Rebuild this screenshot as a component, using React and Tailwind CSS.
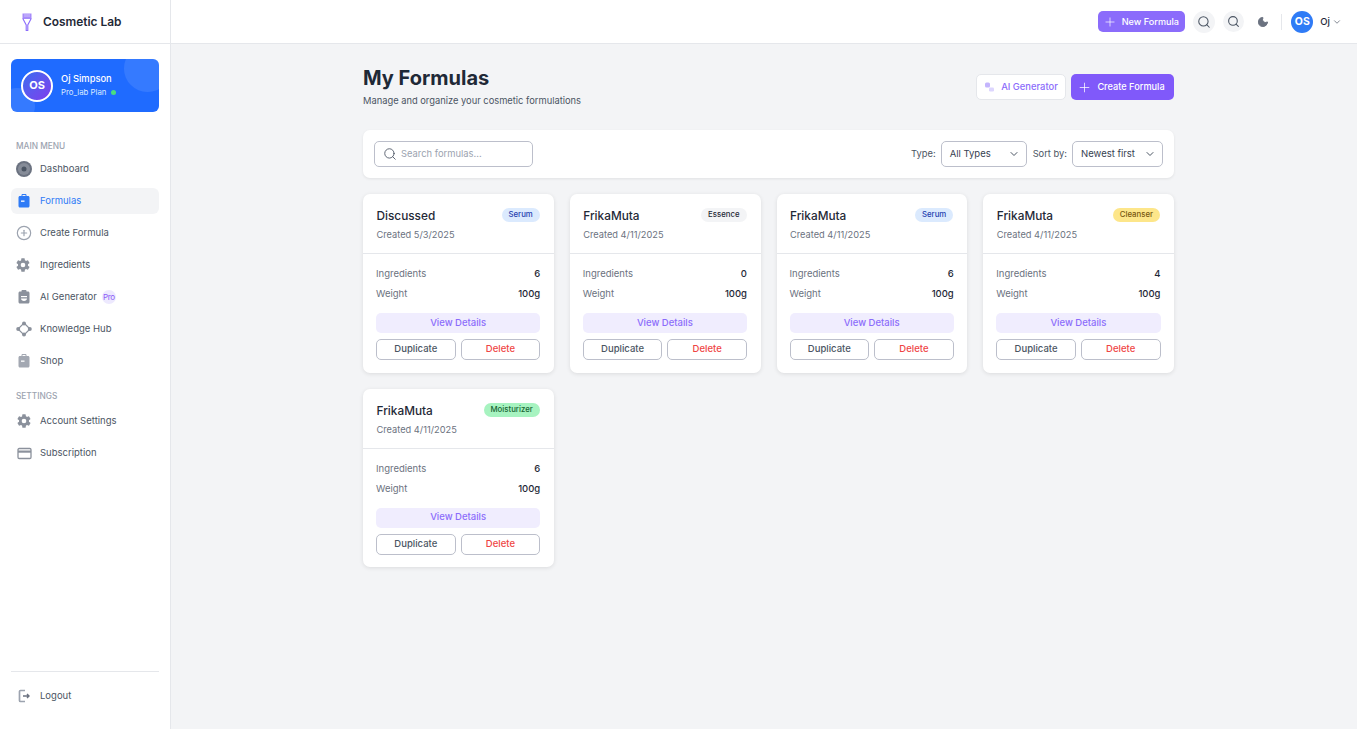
import { Plus, Search, Moon, ChevronDown, CirclePlus } from 'lucide-react';

const cards = [
    { name: 'Discussed', date: '5/3/2025', type: 'Serum', badge: 'bg-[#dbeafe] text-[#1e40af]', count: 6 },
    { name: 'FrikaMuta', date: '4/11/2025', type: 'Essence', badge: 'bg-[#f3f4f6] text-[#1f2937]', count: 0 },
    { name: 'FrikaMuta', date: '4/11/2025', type: 'Serum', badge: 'bg-[#dbeafe] text-[#1e40af]', count: 6 },
    { name: 'FrikaMuta', date: '4/11/2025', type: 'Cleanser', badge: 'bg-[#fde68a] text-[#78570f]', count: 4 },
    { name: 'FrikaMuta', date: '4/11/2025', type: 'Moisturizer', badge: 'bg-[#a7f3c0] text-[#166534]', count: 6 },
];

function DashIcon() {
    return (
        <svg width="16" height="16" viewBox="0 0 16 16">
            <circle cx="8" cy="8" r="8" fill="#6b7280" />
            <circle cx="8" cy="8" r="6" fill="#868c98" />
            <circle cx="8" cy="8" r="2.5" fill="#4b5563" />
        </svg>
    );
}

function BagIcon({ color }) {
    return (
        <svg width="16" height="16" viewBox="0 0 16 16" fill={color}>
            <path d="M5.5 3V2.2C5.5 1.5 6 1 6.7 1h2.6c.7 0 1.2.5 1.2 1.2V3H12c.9 0 1.5.6 1.5 1.5V13c0 .9-.6 1.5-1.5 1.500H4c-.9 0-1.5-.6-1.5-1.500V4.500C2.500 3.600 3.100 3 4 3h1.500zm1 0h3V2h-3v1z" />
            <rect x="5" y="7.500" width="3.500" height="1.300" fill="#fff" />
        </svg>
    );
}

function GearIcon({ className }) {
    return (
        <svg width="16" height="16" viewBox="0 0 24 24" fill="#8b919c" className={className}>
            <path d="M19.400 13c.04-.33.1-.66.1-1s-.06-.67-.1-1l2.100-1.650a.5.5 0 0 0 .12-.64l-2-3.460a.5.5 0 0 0-.61-.22l-2.490 1a7.300 7.300 0 0 0-1.690-.98l-.38-2.650A.49.49 0 0 0 14 2h-4a.49.49 0 0 0-.49.42l-.38 2.650c-.61.25-1.170.59-1.690.98l-2.490-1a.49.49 0 0 0-.61.22l-2 3.460a.49.49 0 0 0 .12.64L4.570 11c-.04.33-.07.66-.07 1s.03.67.07 1l-2.110 1.650a.5.5 0 0 0-.12.64l2 3.460c.12.22.39.3.61.22l2.490-1c.52.4 1.080.73 1.690.98l.38 2.650c.03.24.24.42.49.42h4c.25 0 .46-.18.49-.42l.38-2.650c.61-.25 1.170-.59 1.690-.98l2.490 1c.22.08.49 0 .61-.22l2-3.460a.5.5 0 0 0-.12-.64L19.400 13zM12 15.500a3.500 3.500 0 1 1 0-7 3.500 3.500 0 0 1 0 7z" />
        </svg>
    );
}

function AiIcon() {
    return (
        <svg width="16" height="16" viewBox="0 0 16 16">
            <path d="M5.500 2.500V2c0-.6.4-1 1-1h3c.6 0 1 .4 1 1v.5H12c.8 0 1.500.7 1.500 1.500v9c0 .8-.7 1.500-1.500 1.500H4c-.8 0-1.500-.7-1.500-1.500V4c0-.8.7-1.500 1.500-1.500h1.500z" fill="#8b919c" />
            <path d="M5 9.500c0 1.500 1.300 2.500 3 2.500s3-1 3-2.500H5z" fill="#fff" />
            <rect x="5" y="7" width="6" height="1.200" fill="#fff" />
        </svg>
    );
}

function HubIcon() {
    return (
        <svg width="16" height="16" viewBox="0 0 16 16" fill="none">
            <path d="M8 2 14 8 8 14 2 8Z" stroke="#8b919c" strokeWidth="1.200" />
            <circle cx="8" cy="2.500" r="2" fill="#8b919c" />
            <circle cx="8" cy="13.500" r="2" fill="#8b919c" />
            <circle cx="2.200" cy="8" r="2" fill="#8b919c" />
            <circle cx="13.800" cy="8" r="2" fill="#8b919c" />
        </svg>
    );
}

function CardIcon() {
    return (
        <svg width="15" height="15" viewBox="0 0 15 15" fill="none">
            <rect x="1" y="2.500" width="13" height="10" rx="1.200" stroke="#8b919c" strokeWidth="1.300" />
            <rect x="1" y="4.500" width="13" height="2.200" fill="#8b919c" />
        </svg>
    );
}

function LogoutIcon() {
    return (
        <svg width="16" height="16" viewBox="0 0 16 16" fill="none" stroke="#9ca3af">
            <path d="M9 2.500H4.500a1 1 0 0 0-1 1v9a1 1 0 0 0 1 1H9" strokeWidth="1.700" />
            <path d="M7 8h6M11 6l2 2-2 2" stroke="#6b7280" strokeWidth="1.400" />
        </svg>
    );
}

function NavItem({ icon, label, active, pro }) {
    return (
        <div className={`h-[26px] mb-1.5 rounded-md flex items-center pl-[5px] gap-2 text-[9.500px] ${active ? 'bg-[#f3f4f6] text-[#2f7bf6]' : 'text-[#4b5563]'}`}>
            <span className="w-4 flex justify-center shrink-0">{icon}</span>
            <span>{label}</span>
            {pro && <span className="w-[14px] h-[14px] rounded-full bg-[#ede9fe] text-[#8b5cf6] text-[8px] flex items-center justify-center -ml-[3px] tracking-tighter">Pro</span>}
        </div>
    );
}

function Sidebar() {
    return (
        <aside className="w-[171px] shrink-0 h-screen bg-white border-r border-[#e5e7eb] flex flex-col">
            <div className="h-[44px] border-b border-[#e5e7eb] flex items-center pl-[22px] shrink-0">
                <svg width="10" height="18" viewBox="0 0 10 18" fill="none">
                    <path d="M.5.500h9v5.500h-9z" fill="#a78bfa" />
                    <path d="M.8 5.500 4.200 12v5.500h1.600V12l3.400-6.500" stroke="#8b6cfb" strokeWidth="1.100" />
                    <path d="M3 1v3M5 1v3M7 1v3" stroke="#ede9fe" strokeWidth=".6" />
                </svg>
                <span className="ml-[11px] text-[11.900px] font-semibold text-[#1f2937]">Cosmetic Lab</span>
            </div>
            <div className="px-[11px] pt-[15px] flex-1 flex flex-col">
                <div className="relative overflow-hidden h-[53px] rounded-md bg-[#1f6bff] flex items-center pl-[10px] shrink-0">
                    <div className="absolute -top-[14px] -right-[12px] w-[47px] h-[47px] rounded-full bg-white/10" />
                    <div className="absolute -bottom-[12px] -left-[12px] w-[36px] h-[36px] rounded-full bg-white/10" />
                    <div className="relative w-8 h-8 rounded-full border-2 border-white bg-gradient-to-br from-[#2f6bf0] to-[#7c3aed] text-white text-[11px] font-bold flex items-center justify-center">OS</div>
                    <div className="relative ml-[8px]">
                        <div className="text-white text-[9.330px] font-medium leading-[13px]">Oj Simpson</div>
                        <div className="flex items-center gap-[5px] mt-[1px] text-[7.800px] text-[#dbeafe] leading-[13px]">
                            Pro_lab Plan <span className="w-[5px] h-[5px] rounded-full bg-[#4ade80]" />
                        </div>
                    </div>
                </div>
                <div className="mt-[28px] mb-[4px] pl-[5px] text-[8.300px] font-medium text-[#9ca3af] leading-[12px]">MAIN MENU</div>
                <NavItem icon={<DashIcon />} label="Dashboard" />
                <NavItem icon={<BagIcon color="#2f7bf6" />} label="Formulas" active />
                <NavItem icon={<CirclePlus size={16} strokeWidth={1.800} color="#9ca3af" />} label="Create Formula" />
                <NavItem icon={<GearIcon className="-ml-[2px]" />} label="Ingredients" />
                <NavItem icon={<AiIcon />} label="AI Generator" pro />
                <NavItem icon={<HubIcon />} label="Knowledge Hub" />
                <NavItem icon={<BagIcon color="#a3a8b2" />} label="Shop" />
                <div className="mt-[10px] mb-[6px] pl-[5px] text-[8.300px] font-medium text-[#9ca3af] leading-[12px]">SETTINGS</div>
                <NavItem icon={<GearIcon className="-ml-[1px]" />} label="Account Settings" />
                <NavItem icon={<CardIcon />} label="Subscription" />
                <div className="mt-auto mb-[14px] border-t border-[#e5e7eb] pt-[11px]">
                    <NavItem icon={<LogoutIcon />} label="Logout" />
                </div>
            </div>
        </aside>
    );
}

function Topbar() {
    return (
        <header className="h-[44px] bg-white border-b border-[#e5e7eb] flex items-center justify-end pr-[15px] shrink-0">
            <button className="h-[21px] w-[87px] rounded-[5px] bg-[#8b6cfb] text-white text-[9.100px] font-medium flex items-center justify-center gap-[5px] pr-[2px]">
                <Plus size={14} strokeWidth={1.200} />New Formula
            </button>
            <span className="ml-[8px] w-[22px] h-[22px] rounded-full bg-[#f3f4f6] flex items-center justify-center">
                <Search size={14} color="#4b5563" strokeWidth={1.800} />
            </span>
            <span className="ml-[8px] w-[21px] h-[21px] rounded-full bg-[#f3f4f6] flex items-center justify-center">
                <Search size={13} color="#4b5563" strokeWidth={2} />
            </span>
            <span className="ml-[8px] w-[21px] h-[21px] flex items-center justify-center">
                <Moon size={12} color="#6b7280" fill="#6b7280" />
            </span>
            <span className="ml-[8px] w-px h-[16px] bg-[#e5e7eb]" />
            <span className="ml-[9px] w-[22px] h-[22px] rounded-full bg-[#2f7bf6] text-white text-[10.500px] font-bold flex items-center justify-center">OS</span>
            <span className="ml-[7px] mt-[1px] text-[9.500px] font-medium text-[#1f2937]">Oj</span>
            <ChevronDown size={10} color="#6b7280" className="ml-[2px] mt-[1px]" />
        </header>
    );
}

function FilterSelect({ label, width }) {
    return (
        <div className={`h-[26px] ${width} border border-[#bcbfcb] rounded-[5px] bg-white flex items-center justify-between pl-[8px] pr-[6px] text-[9.500px] text-[#374151]`}>
            {label}<ChevronDown size={12} color="#4b5563" />
        </div>
    );
}

function FormulaCard({ card }) {
    return (
        <div className="bg-white rounded-[7px] shadow-[0_1px_4px_rgba(0,0,0,0.1)]">
            <div className="h-[60px] border-b border-[#e5e7eb] pl-[13.500px] pr-[14px] pt-[14px]">
                <div className="flex items-center justify-between h-[14px]">
                    <span className="mt-[4px] text-[11.800px] font-medium text-[#1f2937]">{card.name}</span>
                    <span className={`h-[14px] px-[7px] rounded-full text-[7.800px] font-medium flex items-center ${card.badge}`}>{card.type}</span>
                </div>
                <div className="mt-[6px] text-[9.250px] leading-[14px] text-[#6b7280]">Created {card.date}</div>
            </div>
            <div className="pl-[13px] pr-[13.500px] pt-[13px] pb-[12.500px]">
                <div className="flex justify-between text-[9.500px] leading-[14px] text-[#6b7280]">
                    Ingredients<span className="font-medium text-[#1f2937]">{card.count}</span>
                </div>
                <div className="flex justify-between text-[9.500px] leading-[14px] text-[#6b7280] mt-[6px]">
                    Weight<span className="font-medium text-[#1f2937]">100g</span>
                </div>
                <button className="mt-[12px] w-full h-[20px] rounded-[5px] bg-[#f0edfe] text-[#8b6cfb] text-[9.500px] font-medium">View Details</button>
                <div className="flex gap-[5px] mt-[6px]">
                    <button className="flex-1 h-[21px] border border-[#bcbfcb] rounded-[5px] text-[9.500px] font-medium text-[#4b5563]">Duplicate</button>
                    <button className="flex-1 h-[21px] border border-[#bcbfcb] rounded-[5px] text-[9.500px] font-medium text-[#ef4444]">Delete</button>
                </div>
            </div>
        </div>
    );
}

export default function App() {
    return (
        <div className="flex h-screen bg-[#f3f4f6] overflow-hidden font-['Inter',sans-serif]">
            <Sidebar />
            <div className="flex-1 flex flex-col min-w-0">
                <Topbar />
                <main className="pl-[192px] pt-[22px] w-[1003px]">
                    <div className="flex items-start justify-between">
                        <div>
                            <h1 className="text-[20px] font-bold text-[#1f2937] leading-[24px]">My Formulas</h1>
                            <p className="mt-[4px] text-[9.330px] leading-[14px] text-[#4b5563]">Manage and organize your cosmetic formulations</p>
                        </div>
                        <div className="flex gap-[5px] mt-[8px]">
                            <button className="h-[26px] w-[90px] bg-white border border-[#e5e7eb] rounded-[5px] text-[#8b6cfb] text-[9.400px] font-medium flex items-center justify-center gap-[5px]">
                                <svg width="12" height="12" viewBox="0 0 12 12" fill="#c4b5fd">
                                    <rect x="1" y="1.500" width="5" height="5" rx="1.500" />
                                    <rect x="5" y="6.500" width="5" height="4" rx="1.200" fill="#ddd6fe" />
                                </svg>
                                AI Generator
                            </button>
                            <button className="h-[26px] w-[103px] bg-[#8059fa] rounded-[5px] text-white text-[9.200px] font-medium flex items-center justify-center gap-[5px] pr-[3px]">
                                <Plus size={15} strokeWidth={1.200} />Create Formula
                            </button>
                        </div>
                    </div>
                    <div className="mt-[22px] h-[48px] bg-white rounded-[7px] shadow-[0_1px_3px_rgba(0,0,0,0.08)] flex items-center px-[11px]">
                        <div className="w-[159px] h-[26px] border border-[#bcbfcb] rounded-[5px] flex items-center pl-[8px] gap-[4px] text-[9.400px] text-[#9ca3af]">
                            <Search size={14} color="#4b5563" strokeWidth={1.500} />Search formulas...
                        </div>
                        <div className="ml-auto flex items-center text-[9.330px] text-[#4b5563]">
                            <span>Type:</span>
                            <span className="ml-[5px]"><FilterSelect label="All Types" width="w-[86px]" /></span>
                            <span className="ml-[6px]">Sort by:</span>
                            <span className="ml-[5px]"><FilterSelect label="Newest first" width="w-[91px]" /></span>
                        </div>
                    </div>
                    <div className="mt-[16px] grid grid-cols-4 gap-4">
                        {cards.map((card, i) => <FormulaCard key={i} card={card} />)}
                    </div>
                </main>
            </div>
        </div>
    );
}
